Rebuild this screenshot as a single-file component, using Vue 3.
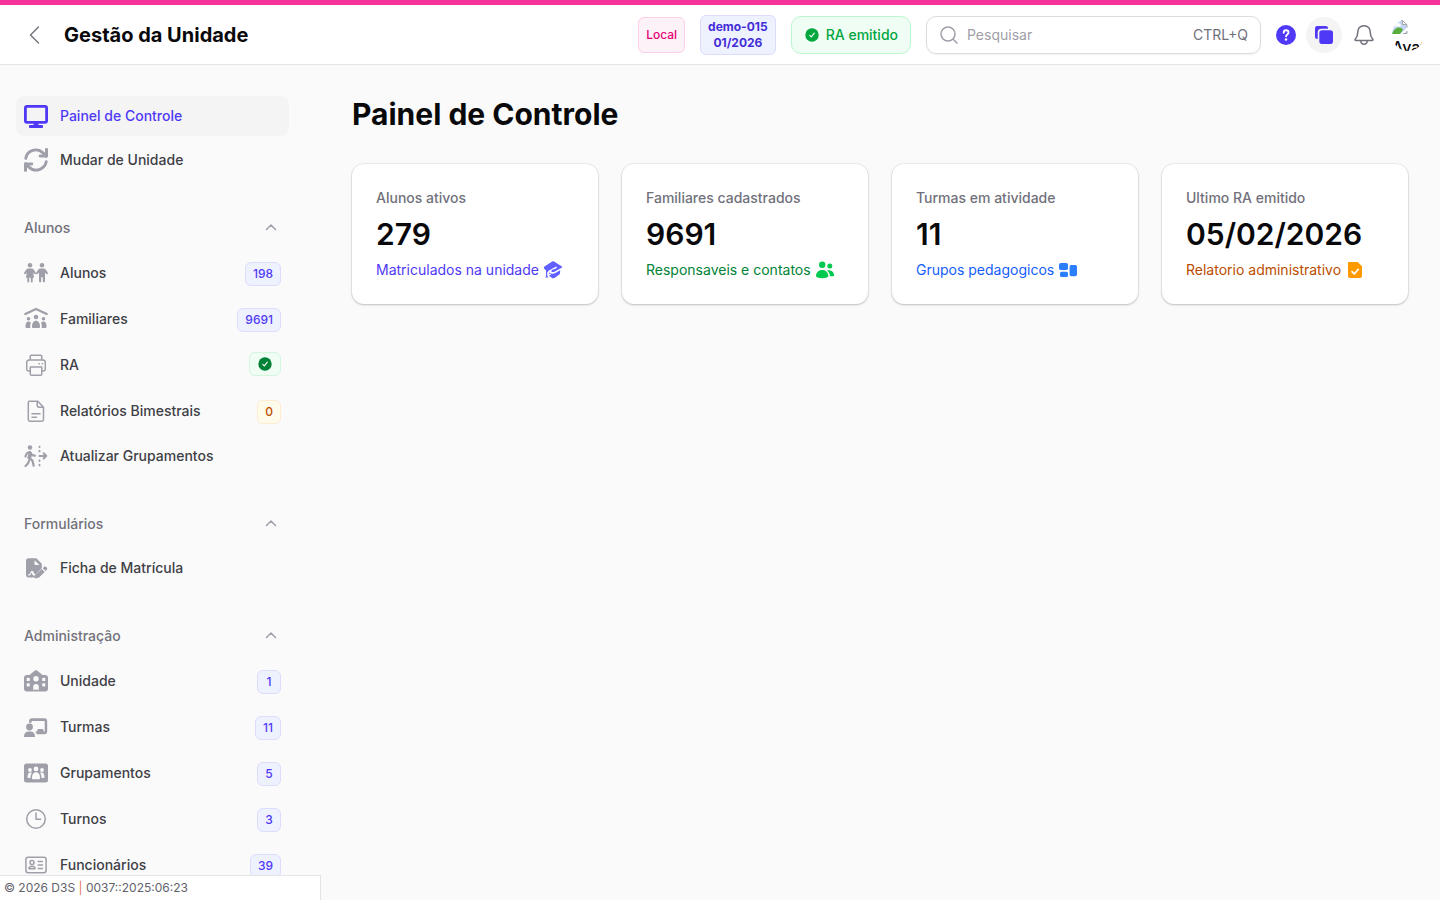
<template>
    <div class="layout">
        <header class="topbar">
            <button class="back-btn" type="button" aria-label="Voltar">
                <svg class="icon" viewBox="0 0 24 24" v-html="icons.back"></svg>
            </button>
            <span class="brand">Gestão da Unidade</span>

            <div class="topbar-end">
                <span class="env-badge">Local</span>
                <span class="unit-badge">demo-015<br />01/2026</span>
                <button class="ra-btn" type="button">
                    <svg class="check-icon" viewBox="0 0 16 16" v-html="icons.check"></svg>
                    RA emitido
                </button>

                <label class="search">
                    <svg class="search-icon" viewBox="0 0 20 20" v-html="icons.search"></svg>
                    <input v-model="search" type="search" placeholder="Pesquisar" aria-label="Pesquisar" />
                    <span class="shortcut">CTRL+Q</span>
                </label>
            </div>

            <div class="actions">
                <button class="help-btn" type="button" aria-label="Ajuda">
                    <svg class="icon" viewBox="0 0 24 24" v-html="icons.help"></svg>
                </button>
                <button class="round-btn" type="button" aria-label="Painéis">
                    <svg class="icon" viewBox="0 0 24 24" v-html="icons.panels"></svg>
                </button>
                <button class="bell-btn" type="button" aria-label="Notificações">
                    <svg class="icon" viewBox="0 0 24 24" v-html="icons.bell"></svg>
                </button>
                <button class="avatar" type="button" aria-label="Avatar">
                    <svg class="avatar-pic" viewBox="0 0 16 16" v-html="icons.picture"></svg>
                    <span>Avatar</span>
                </button>
            </div>
        </header>

        <div class="body">
            <aside class="sidebar">
                <nav class="nav">
                    <section v-for="(group, index) in groups" :key="index" class="group">
                        <button v-if="group.label" class="group-label" type="button" @click="group.open = !group.open">
                            {{ group.label }}
                            <svg class="chevron" :class="{ closed: !group.open }" viewBox="0 0 20 20" v-html="icons.chevron"></svg>
                        </button>
                        <template v-if="group.open">
                            <a
                                v-for="item in group.items"
                                :key="item.label"
                                href="#"
                                class="item"
                                :class="{ active: item.label === current }"
                                @click.prevent="current = item.label"
                            >
                                <svg class="icon" viewBox="0 0 24 24" v-html="icons[item.icon]"></svg>
                                <span class="item-label">{{ item.label }}</span>
                                <span v-if="item.badge" class="badge" :class="item.color">{{ item.badge }}</span>
                                <span v-if="item.done" class="badge success">
                                    <svg class="check-icon" viewBox="0 0 16 16" v-html="icons.check"></svg>
                                </span>
                            </a>
                        </template>
                    </section>
                </nav>
                <footer class="version">© 2026 D3S <span class="bar">|</span> 0037::2025:06:23</footer>
            </aside>

            <main class="content">
                <h1>Painel de Controle</h1>
                <div class="stats">
                    <article v-for="stat in stats" :key="stat.label" class="stat">
                        <span class="stat-label">{{ stat.label }}</span>
                        <strong class="stat-value">{{ stat.value }}</strong>
                        <span class="stat-desc" :class="stat.color">
                            {{ stat.desc }}
                            <svg class="stat-icon" viewBox="0 0 20 20" v-html="icons[stat.icon]"></svg>
                        </span>
                    </article>
                </div>
            </main>
        </div>
    </div>
</template>

<script setup>
import { ref } from 'vue'

const search = ref('')
const current = ref('Painel de Controle')

const groups = ref([
    {
        open: true,
        items: [
            { label: 'Painel de Controle', icon: 'desktop' },
            { label: 'Mudar de Unidade', icon: 'rotate' },
        ],
    },
    {
        label: 'Alunos',
        open: true,
        items: [
            { label: 'Alunos', icon: 'children', badge: '198' },
            { label: 'Familiares', icon: 'family', badge: '9691' },
            { label: 'RA', icon: 'printer', done: true },
            { label: 'Relatórios Bimestrais', icon: 'document', badge: '0', color: 'warning' },
            { label: 'Atualizar Grupamentos', icon: 'walking' },
        ],
    },
    {
        label: 'Formulários',
        open: true,
        items: [{ label: 'Ficha de Matrícula', icon: 'contract' }],
    },
    {
        label: 'Administração',
        open: true,
        items: [
            { label: 'Unidade', icon: 'school', badge: '1' },
            { label: 'Turmas', icon: 'teacher', badge: '11' },
            { label: 'Grupamentos', icon: 'people', badge: '5' },
            { label: 'Turnos', icon: 'clock', badge: '3' },
            { label: 'Funcionários', icon: 'card', badge: '39' },
        ],
    },
])

const stats = [
    { label: 'Alunos ativos', value: '279', desc: 'Matriculados na unidade', icon: 'cap', color: 'indigo' },
    { label: 'Familiares cadastrados', value: '9691', desc: 'Responsaveis e contatos', icon: 'users', color: 'green' },
    { label: 'Turmas em atividade', value: '11', desc: 'Grupos pedagogicos', icon: 'blocks', color: 'blue' },
    { label: 'Ultimo RA emitido', value: '05/02/2026', desc: 'Relatorio administrativo', icon: 'docCheck', color: 'orange' },
]

const line = 'fill="none" stroke="currentColor" stroke-linecap="round" stroke-linejoin="round"'

const icons = {
    back: `<path ${line} stroke-width="1.4" d="M14.5 4 6.5 12l8 8"/>`,
    chevron: `<path ${line} stroke-width="1.5" d="m5.500 11.500 4.500-4.500L14.500 11.500"/>`,
    check: '<circle cx="8" cy="8" r="6.700" fill="currentColor"/><path d="m5.800 8.300 1.500 1.500 3-3.600" fill="none" stroke="#fff" stroke-width="1.1" stroke-linecap="round" stroke-linejoin="round"/>',
    search: `<g ${line} stroke-width="1.5"><circle cx="9" cy="9" r="7"/><path d="m14.200 14.200 3.800 3.800"/></g>`,
    help: '<circle cx="12" cy="12" r="10" fill="currentColor"/><path d="M9.700 9.700c0-1.500 1-2.400 2.400-2.400s2.400.9 2.400 2.200c0 1.900-2.400 1.900-2.400 3.800" fill="none" stroke="#fff" stroke-width="1.900" stroke-linecap="round"/><circle cx="12" cy="16.500" r="1.200" fill="#fff"/>',
    panels: '<path fill="currentColor" d="M5.500 3h8.300C15.200 3 16 3.800 16 5.200v.5H9.500A3.800 3.800 0 0 0 5.700 9.500V16h-.2C3.800 16 3 15.200 3 13.500v-8C3 3.800 3.800 3 5.500 3Z"/><rect x="7.300" y="7.300" width="13.700" height="13.700" rx="2.800" fill="currentColor"/>',
    bell: `<g ${line} stroke-width="1.500"><path d="M12 2.700c-4.100 0-6.200 2.900-6.200 6.300 0 4.200-1.200 5.700-2.500 7.200-.5.600-.2 1.300.5 1.300h16.400c.7 0 1-.7.500-1.300-1.300-1.500-2.500-3-2.500-7.200 0-3.400-2.100-6.300-6.200-6.300Z"/><path d="M8.800 17.800c0 2 1.400 3.400 3.200 3.400s3.200-1.400 3.200-3.400"/></g>`,
    picture: '<path fill="#c3d5f5" d="M0 1h10.500L15 5.500V15H0z"/><path fill="#fff" d="M2.500 7.500A1.800 1.800 0 0 1 4.500 5a2 2 0 0 1 3.500 0c1.200.2 1.200 2 0 2.500Z"/><path fill="#58ad3b" d="M0 15c1.500-4 4-6.500 7-6.500 1.500 0 3 .9 4 2.300L8 15Z"/><path fill="#fff" d="M16 7.500 7.500 16h2.700L16 10.700Z"/><path d="M10.500 1.500v4H15Z" fill="#fff"/><path d="M7.500 1.500h3L15 6v2.500M10.500 1.500v4H15M11 14.500h4v-2.500" fill="none" stroke="#a5a5a8"/>',

    desktop: `<rect x="1.400" y="2.400" width="21.200" height="16" rx="1.600" fill="none" stroke="currentColor" stroke-width="2.800"/><path fill="currentColor" d="M10 19h4l.6 2H18a1 1 0 0 1 1 1v1a1 1 0 0 1-1 1H6a1 1 0 0 1-1-1v-1a1 1 0 0 1 1-1h3.400Z"/>`,
    rotate: `<g ${line} stroke-width="2.900"><path d="M1.700 10.400A10.300 10.300 0 0 1 19 4.900l3.200 3.200M22.300 13.600A10.300 10.300 0 0 1 5 19.100l-3.200-3.200"/></g><path fill="currentColor" d="M21 1.200C21 .5 21.700 0 22.500 0S24 .5 24 1.400v6.800c0 .7-.5 1.200-1.200 1.200h-6.900c-1.300 0-1.700-2.600 0-2.800H21ZM3 22.800c0 .7-.7 1.200-1.500 1.200S0 23.500 0 22.600v-6.800c0-.7.500-1.200 1.200-1.200h6.900c1.300 0 1.700 2.600 0 2.800H3Z"/>`,
    children: '<g fill="currentColor"><circle cx="6" cy="4.200" r="2.300"/><circle cx="18" cy="4.200" r="2.300"/><path d="M4.300 7.500h3.400c.8 0 1.500.4 2 1l2 3c.8 1.300-.8 2.400-1.700 1.300L9 11.500l1.200 5.300H8.700v3.600c0 1.300-1.900 1.300-1.900 0v-3.600H5.200v3.600c0 1.300-1.900 1.300-1.900 0v-3.600H1.800L3 11.500l-1 1.300c-.9 1.100-2.500 0-1.700-1.300l2-3c.5-.6 1.200-1 2-1ZM16.300 7.500h3.400c.8 0 1.500.4 2 1l2 3c.8 1.300-.8 2.400-1.700 1.300l-1-1.300v8.800c0 1.500-2.200 1.500-2.200 0v-4h-1.600v4c0 1.500-2.200 1.500-2.200 0v-8.800l-1 1.300c-.9 1.100-2.500 0-1.700-1.300l2-3c.5-.6 1.200-1 2-1Z"/></g>',
    family: `<path ${line} stroke-width="2.200" d="M1.300 7 12 1.900 22.700 7"/><g fill="currentColor"><circle cx="12" cy="10" r="2.300"/><circle cx="4.500" cy="11.700" r="1.800"/><circle cx="19.500" cy="11.700" r="1.800"/><path d="M8 19.500c0-3.200 1.500-5.700 4-5.700s4 2.500 4 5.700c0 1-.4 1.500-1.200 1.500H9.200c-.8 0-1.200-.5-1.200-1.500ZM1.500 19c0-2.700 1-4.500 3-4.500 1 0 1.800.4 2.400 1.200-.5 1.200-.8 2.600-.6 4.300 0 .6-.1 1-.1 1H2.500c-.7 0-1-.5-1-2ZM22.500 19c0-2.700-1-4.500-3-4.500-1 0-1.800.4-2.400 1.200.5 1.200.8 2.600.6 4.300 0 .6.1 1 .1 1h3.700c.7 0 1-.5 1-2Z"/></g>`,
    printer: `<g ${line} stroke-width="1.500"><path d="M6.200 7V3.500c0-.8.400-1.200 1.200-1.200h9.200c.8 0 1.200.4 1.200 1.200V7M6 18H4.800c-1.300 0-2.100-.8-2.100-2.200V9.600C2.700 7.900 3.700 7 5.200 7h13.600c1.500 0 2.500.9 2.500 2.600v6.200c0 1.400-.8 2.200-2.100 2.200H18"/><path d="M6.300 14h11.500v7c0 .9-.4 1.300-1.200 1.300H7.500c-.8 0-1.200-.4-1.200-1.300ZM15 10.700h.3M18.300 10.700h.3"/></g>`,
    document: `<path ${line} stroke-width="1.500" d="M5.500 2.300h8.300l5.700 6v12.200c0 1.100-.6 1.700-1.700 1.700H6c-1.100 0-1.700-.6-1.700-1.700V3.500c0-.8.400-1.200 1.200-1.200ZM13.200 2.500v3.800c0 1.200.7 1.900 2 1.900h4M8 14.800h8M8 18.200h4.500"/>`,
    walking: `<circle cx="6" cy="3.500" r="2.200" fill="currentColor"/><g ${line}><path stroke-width="2.200" d="M1.500 12.500c.5-2.500 2-4.200 4.500-4.500l2 3.200 2.800.5M5.200 16.500c-.4 2-1.300 3.500-3.700 5.500M6 14.500l2.500 2.200 1.200 5"/><path stroke-width="3.800" d="m6.300 9.500-1 4.500"/><path stroke-width="2" d="M15.500 11.900h6.700M19.700 9.300l2.600 2.600-2.600 2.600"/><path stroke-width="1.900" d="M15.500 2.600v.4M15.500 6.700v.7M15.500 16.400v.7M15.500 20.700v.7"/></g>`,
    contract: '<path fill="currentColor" fill-rule="evenodd" d="M4.700 2.200h7.600l5.500 5.600v4.500l-5.500 5.500-1.200 3.700H4.700c-1.700 0-2.700-1-2.700-2.700V4.900c0-1.700 1-2.700 2.700-2.700Zm5.800 2v4.100c0 .5.300.8.800.8h4.200ZM4.200 18.700c0 .6.300.9.900.9.700 0 1.300-.5 1.600-1.500l.6-1.600 1.200 2.300c.4.600.9.800 1.500.8h1.200v-1.500h-.6l-1.200-2.400c-.5-1.200-2.100-1.200-2.600 0l-1 2c-.2.400-1.600.2-1.600 1Z"/><path fill="currentColor" d="m17.800 13 2.900 2.900-5.600 5.600-3.500.9c-.5.100-.8-.2-.7-.7l.9-3.100ZM18.700 12.200l1.200-1.200c1.800-1.500 4.300 1 2.900 2.800l-1.200 1.200Z"/>',
    school: '<path fill="currentColor" fill-rule="evenodd" d="M12 1.200c.5 0 1 .1 1.400.5L18.500 6H21c2 0 3 1 3 3v10.500c0 2-1 3-3 3h-6.200v-4.300c0-2.200-.8-3.200-2.800-3.200s-2.800 1-2.800 3.200v4.300H3c-2 0-3-1-3-3V9c0-2 1-3 3-3h2.500l5.100-4.300c.4-.4.900-.5 1.400-.5ZM12 7a2.700 2.700 0 1 0 0 5.400A2.700 2.700 0 0 0 12 7ZM3.600 8.800c-.6 0-.9.300-.9.900v1.500c0 .6.300.9.900.9h1.300c.6 0 .9-.3.900-.9V9.700c0-.6-.3-.9-.9-.9Zm15.500 0c-.6 0-.9.300-.9.900v1.500c0 .6.300.9.900.9h1.300c.6 0 .9-.3.900-.9V9.700c0-.6-.3-.9-.9-.9ZM3.600 14.200c-.6 0-.9.300-.9.900v1.500c0 .6.300.9.900.9h1.300c.6 0 .9-.3.900-.9v-1.500c0-.6-.3-.9-.9-.9Zm15.500 0c-.6 0-.9.300-.9.900v1.500c0 .6.300.9.900.9h1.300c.6 0 .9-.3.900-.9v-1.500c0-.6-.3-.9-.9-.9Z"/><path fill="currentColor" d="M9.200 20.700h5.600v1.800H9.200z"/>',
    teacher: '<g fill="currentColor"><circle cx="5.500" cy="12" r="3.400"/><path d="M0 21.400C0 18.400 2 16.500 4.500 16.500h2c2.500 0 4.500 1.900 4.500 4.900 0 .4-.3.600-.7.600H.7c-.4 0-.7-.2-.7-.6Z"/><path d="M5 6.500C5 4.500 6.300 3.300 8 3.300h12.500c1.700 0 2.700 1.200 2.700 3v9.900c0 1.800-1 3-2.700 3h-7.800c-.2-1.200-.8-2-1.500-2.700h2v-.8c0-1 .6-1.700 1.700-1.700h3c1.100 0 1.700.7 1.700 1.700v.8h1.100V5.900H7.600v2.200c-.8-.5-1.700-.7-2.600-.7Z"/></g>',
    people: '<rect x="0" y="2.500" width="24" height="19" rx="2.500" fill="currentColor"/><g fill="#fafafa"><circle cx="12" cy="7.900" r="2.400"/><circle cx="6" cy="9" r="1.900"/><circle cx="18" cy="9" r="1.900"/><path d="M8 17c0-3.500 1.500-5.700 4-5.700s4 2.200 4 5.700c0 .9-.4 1.300-1.300 1.300H9.300C8.400 18.300 8 17.900 8 17ZM3.500 16c0-2.700 1-4.500 3-4.500.6 0 1 .1 1.400.4-1 1.300-1.400 3-1.400 5.100H4.400c-.6 0-.9-.3-.9-1ZM20.500 16c0-2.700-1-4.500-3-4.500-.6 0-1 .1-1.400.4 1 1.300 1.400 3 1.400 5.100h2.100c.6 0 .9-.3.900-1Z"/></g>',
    clock: `<g ${line} stroke-width="1.500"><circle cx="12" cy="12" r="9.300"/><path d="M12 6v6.200h4.600"/></g>`,
    card: `<g ${line} stroke-width="1.500"><rect x="1.900" y="4.300" width="20.200" height="15.500" rx="2.200"/><circle cx="8" cy="9.500" r="2"/><path d="M4.900 15.800c.3-1.700 1.500-2.500 3.100-2.500s2.800.8 3.100 2.500ZM14.200 8.600h4.200M14.200 12h4.200M14.200 15.400h4.200"/></g>`,

    cap: '<g fill="currentColor"><path d="M9.200 1.500c.6-.4 1.200-.4 1.800 0l7.600 4.700c.7.400.7 1 0 1.500l-6.700 3.800c-2.100 1.100-4.200.3-3.400-1.100.6-1 3.700-1.200 5.100-2.400.8-.7-.1-1.700-1.300-1.100L6 10.500c-.7.400-1.200.9-1.300 1.700L1.500 9.100C.7 8.400.7 7 1.500 6.400Z"/><path d="M3 10.500h1.400l-.2 4.800 1 2.300H2.300l.8-2.300ZM6.300 12.400c1.700 1.700 4.200 1.600 6.600.3l4.200-2.400v2.600c0 1.500-2.800 3-6.100 5.200-.6.400-1.200.4-1.800 0l-3.400-2.300 2.500-1.300-2.500-1Z"/></g>',
    users: '<g fill="currentColor"><circle cx="7.200" cy="4.700" r="3.200"/><circle cx="14.800" cy="6.100" r="2.500"/><path d="M1 16c0-3.400 2.600-6.100 6.200-6.100s6.200 2.700 6.200 6.100c0 1.200-2.300 2.300-6.200 2.300S1 17.200 1 16ZM12 10.500c3.800-1.100 7 1.300 7.200 5 0 .6-1.300 1-4.300.8 0-2.500-1-4.300-2.900-5.800Z"/></g>',
    blocks: '<g fill="currentColor"><rect x="1" y="3" width="9" height="7" rx="1.700"/><rect x="2" y="11.700" width="8" height="5.300" rx="1.500"/><rect x="11.600" y="5" width="7.400" height="11.200" rx="1.700"/></g>',
    docCheck: '<path fill="currentColor" d="M4 2h8.700L17 6.200v9.600c0 1.400-.8 2.200-2.200 2.200H5c-1.300 0-2-.7-2-2V3.200C3 2.400 3.300 2 4 2Z"/><path d="m7 11.700 2.300 2.300 4-4.700" fill="none" stroke="#fff" stroke-width="1.700" stroke-linecap="round" stroke-linejoin="round"/>',
}
</script>

<style>
body {
    background: #fafafa;
}
</style>

<style scoped>
.layout {
    height: 100vh;
    display: flex;
    flex-direction: column;
    background: #fafafa;
    color: #09090b;
    font-family: 'Inter', sans-serif;
    font-size: 14px;
    line-height: 20px;
}

.layout * {
    box-sizing: border-box;
}

button {
    background: none;
    border: none;
    padding: 0;
    color: inherit;
    font: inherit;
    cursor: pointer;
}

svg {
    display: block;
    flex-shrink: 0;
}

.icon {
    width: 24px;
    height: 24px;
}

.topbar {
    display: flex;
    align-items: center;
    border-top: 5px solid #f6339a;
    border-bottom: 1px solid #e4e4e7;
    padding: 10px 16px 9px 24px;
    background: white;
}

.back-btn {
    color: #71717b;
}

.brand {
    margin-left: 16px;
    font-size: 20px;
    line-height: 28px;
    font-weight: 700;
}

.topbar-end {
    margin-left: auto;
    margin-right: 13px;
    display: flex;
    align-items: center;
    gap: 15px;
}

.env-badge {
    padding: 9px 7px;
    border: 1px solid #fccee8;
    border-radius: 6px;
    background: #fdf2f8;
    color: #e60076;
    font-size: 12px;
    line-height: 16px;
    font-weight: 500;
}

.unit-badge {
    padding: 3px 7px;
    border: 1px solid #dcdcfc;
    border-radius: 6px;
    background: #eef2ff;
    color: #432dd7;
    font-size: 12px;
    line-height: 16px;
    font-weight: 700;
    text-align: center;
}

.ra-btn {
    display: flex;
    align-items: center;
    gap: 6px;
    padding: 8px 12px;
    border: 1px solid #b9f8cf;
    border-radius: 10px;
    background: #f0fdf4;
    color: #00a63e;
    font-weight: 500;
}

.check-icon {
    width: 16px;
    height: 16px;
}

.search {
    display: flex;
    align-items: center;
    width: 335px;
    height: 38px;
    padding: 0 12px;
    border: 1px solid #dcdcdf;
    border-radius: 10px;
    color: #9f9fa9;
    box-shadow: 0 1px 2px rgba(0, 0, 0, 0.05);
}

.search-icon {
    width: 20px;
    height: 20px;
}

.search input {
    flex: 1;
    min-width: 0;
    margin-left: 8px;
    padding: 0;
    border: none;
    outline: none;
    background: none;
    color: #09090b;
    font: inherit;
}

.search input::placeholder {
    color: #9f9fa9;
}

.shortcut {
    color: #71717b;
}

.actions {
    display: flex;
    align-items: center;
}

.help-btn {
    margin-right: 8px;
    color: #4f39f6;
}

.round-btn {
    margin-right: 10px;
    padding: 6px;
    border-radius: 50%;
    background: #f4f4f5;
    color: #4f39f6;
}

.bell-btn {
    margin-right: 16px;
    color: #71717b;
}

.avatar {
    width: 32px;
    height: 32px;
    border-radius: 50%;
    overflow: hidden;
    text-align: left;
    font-size: 16px;
    line-height: 24px;
    font-weight: 500;
}

.avatar-pic {
    width: 16px;
    height: 16px;
}

.body {
    flex: 1;
    min-height: 0;
    display: flex;
}

.sidebar {
    width: 321px;
    flex-shrink: 0;
    display: flex;
    flex-direction: column;
}

.nav {
    flex: 1;
    min-height: 0;
    overflow-y: auto;
    scrollbar-width: none;
    padding: 31px 32px 32px 16px;
    display: flex;
    flex-direction: column;
    gap: 28px;
}

.group {
    display: flex;
    flex-direction: column;
    gap: 4px;
}

.group-label {
    display: flex;
    align-items: center;
    justify-content: space-between;
    padding: 10px 8px;
    color: #71717b;
    font-weight: 500;
}

.chevron {
    width: 20px;
    height: 20px;
    color: #9f9fa9;
}

.chevron.closed {
    transform: rotate(180deg);
}

.item {
    display: flex;
    align-items: center;
    gap: 12px;
    padding: 8px;
    border-radius: 8px;
    color: #3f3f46;
    font-weight: 500;
    text-decoration: none;
}

.item .icon {
    color: #9f9fa9;
}

.item.active {
    background: #f4f4f5;
}

.item.active,
.item.active .icon {
    color: #4f39f6;
}

.item-label {
    flex: 1;
}

.badge {
    min-width: 24px;
    height: 24px;
    margin-top: 2px;
    padding: 3px 7px;
    border: 1px solid #dcdcfc;
    border-radius: 6px;
    background: #eef2ff;
    color: #4f39f6;
    font-size: 12px;
    line-height: 16px;
    text-align: center;
}

.badge.success {
    margin-top: 0;
    margin-bottom: 2px;
    border-color: #d5f5df;
    background: #f0fdf4;
    color: #008236;
}

.badge.warning {
    border-color: #fdeccf;
    background: #fffbeb;
    color: #bb4d00;
}

.version {
    padding: 4px;
    border-top: 1px solid #e4e4e7;
    border-right: 1px solid #e4e4e7;
    background: white;
    color: #62626b;
    font-size: 12px;
    line-height: 16px;
}

.bar {
    color: #e2725b;
}

.content {
    flex: 1;
    min-width: 0;
    padding: 31px 32px 32px 31px;
}

h1 {
    margin: 0 0 32px;
    font-size: 30px;
    line-height: 36px;
    font-weight: 700;
}

.stats {
    display: grid;
    grid-template-columns: repeat(4, 1fr);
    gap: 24px;
}

.stat {
    display: flex;
    flex-direction: column;
    gap: 8px;
    padding: 24px;
    border-radius: 12px;
    background: white;
    box-shadow: 0 0 0 1px rgba(9, 9, 11, 0.05), 0 1px 3px rgba(0, 0, 0, 0.1), 0 1px 2px rgba(0, 0, 0, 0.1);
}

.stat-label {
    color: #71717b;
    font-weight: 500;
}

.stat-value {
    font-size: 30px;
    line-height: 36px;
    font-weight: 600;
}

.stat-desc {
    display: flex;
    align-items: center;
    gap: 4px;
    white-space: nowrap;
}

.stat-icon {
    width: 20px;
    height: 20px;
}

.indigo {
    color: #4f39f6;
}

.indigo .stat-icon {
    color: #615fff;
}

.green {
    color: #008236;
}

.green .stat-icon {
    color: #00c950;
}

.blue {
    color: #155dfc;
}

.blue .stat-icon {
    color: #2b7fff;
}

.orange {
    color: #bb4d00;
}

.orange .stat-icon {
    color: #fe9a00;
}
</style>
